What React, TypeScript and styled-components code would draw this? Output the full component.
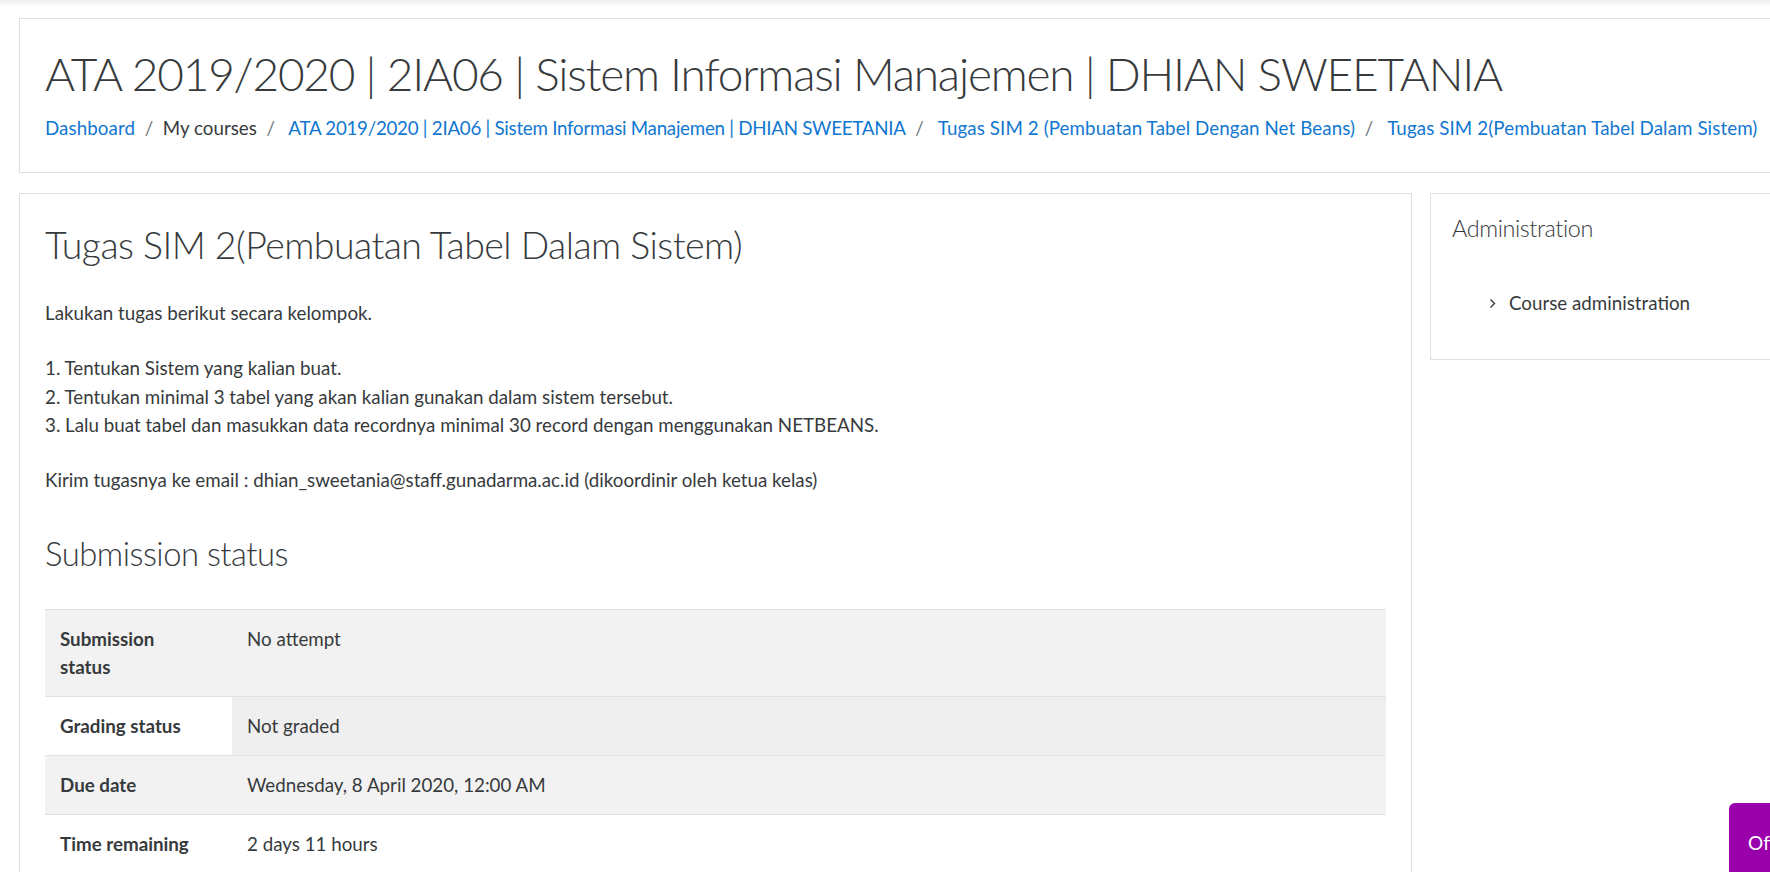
import React from "react";
import styled, { createGlobalStyle } from "styled-components";

const GlobalStyle = createGlobalStyle`
  html, body { margin: 0; padding: 0; background: #fff; overflow: hidden; }
  body {
    font-family: Lato, "Open Sans", "Liberation Sans", sans-serif;
    color: #373a3c;
    font-size: 18.75px;
    line-height: 28.125px;
  }
`;

const TopShadow = styled.div`
  height: 7px;
  background: linear-gradient(to bottom, rgba(0, 0, 0, 0.07), rgba(0, 0, 0, 0));
`;

const Page = styled.div`
  width: 1880px;
  padding: 11px 0 0 19px;
  display: flex;
  flex-direction: column;
  gap: 20px;
`;

const Card = styled.section`
  border: 1px solid #dfdfdf;
  background: #fff;
  box-sizing: border-box;
`;

const HeaderCard = styled(Card)`
  padding: 27px 25px 30px 25px;
`;

const PageTitle = styled.h1`
  margin: 0 0 13px 0;
  font-size: 46px;
  font-weight: 300;
  line-height: 1.2;
  letter-spacing: -1.2px;
  color: #373a3c;
  white-space: nowrap;
`;

const Crumbs = styled.ol`
  list-style: none;
  margin: 0;
  padding: 0;
  display: flex;
  flex-wrap: nowrap;
  white-space: nowrap;
`;

const Crumb = styled.li<{ $first?: boolean }>`
  display: flex;
  &::before {
    content: ${(p) => (p.$first ? "none" : '"/"')};
    color: #6c757d;
    padding: 0 9.6px;
  }
`;

const Link = styled.a<{ $tight?: boolean }>`
  color: #1177d1;
  text-decoration: none;
  letter-spacing: ${(p) => (p.$tight ? "-0.27px" : "0.09px")};
`;

const Columns = styled.div`
  display: flex;
  align-items: flex-start;
  gap: 18px;
`;

const MainCard = styled(Card)`
  width: 1393px;
  height: 720px;
  padding: 28px 25px 25px 25px;
`;

const Heading = styled.h2`
  margin: 0 0 32px 0;
  font-size: 37.5px;
  font-weight: 300;
  line-height: 1.2;
  letter-spacing: -0.55px;
`;

const Para = styled.p`
  margin: 0 0 27px 0;
`;

const SubHeading = styled.h3`
  margin: 40.5px 0 35px 0;
  font-size: 32.8px;
  font-weight: 300;
  line-height: 1.2;
  letter-spacing: -0.5px;
`;

const Table = styled.table`
  width: 100%;
  border-collapse: collapse;
`;

const Row = styled.tr<{ $shade?: boolean }>`
  background: ${(p) => (p.$shade ? "#f2f2f2" : "transparent")};
  border-top: 1px solid #dee2e6;
`;

const Th = styled.th`
  width: 138px;
  text-align: left;
  vertical-align: top;
  padding: 15px 34px 15px 15px;
  font-weight: 700;
`;

const Td = styled.td<{ $shade?: boolean }>`
  vertical-align: top;
  padding: 15px;
  background: ${(p) => (p.$shade ? "#efefef" : "transparent")};
`;

const SideCard = styled(Card)`
  width: 450px;
  padding: 20px 21px 41px 21px;
`;

const SideTitle = styled.h5`
  margin: 0 0 47px 0;
  font-size: 23.4375px;
  font-weight: 300;
  line-height: 1.2;
  letter-spacing: -0.4px;
`;

const NavItem = styled.div`
  display: flex;
  align-items: center;
  gap: 13px;
  padding-left: 37px;
`;

const Badge = styled.div`
  position: fixed;
  left: 1729px;
  top: 803px;
  width: 120px;
  height: 100px;
  background: #9900ab;
  border-top-left-radius: 6px;
  color: #fff;
  font-size: 19px;
  padding: 26px 0 0 19px;
  box-sizing: border-box;
  white-space: nowrap;
`;

const rows = [
  { label: "Submission status", value: "No attempt", shade: true, cellShade: false },
  { label: "Grading status", value: "Not graded", shade: false, cellShade: true },
  { label: "Due date", value: "Wednesday, 8 April 2020, 12:00 AM", shade: true, cellShade: false },
  { label: "Time remaining", value: "2 days 11 hours", shade: false, cellShade: false },
];

export default function App() {
  return (
    <>
      <GlobalStyle />
      <TopShadow />
      <Page>
        <HeaderCard>
          <PageTitle>ATA 2019/2020 | 2IA06 | Sistem Informasi Manajemen | DHIAN SWEETANIA</PageTitle>
          <Crumbs>
            <Crumb $first>
              <Link href="#">Dashboard</Link>
            </Crumb>
            <Crumb>My courses</Crumb>
            <Crumb>
              <Link href="#" $tight>
                &nbsp;ATA 2019/2020 | 2IA06 | Sistem Informasi Manajemen | DHIAN SWEETANIA
              </Link>
            </Crumb>
            <Crumb>
              <Link href="#">&nbsp;Tugas SIM 2 (Pembuatan Tabel Dengan Net Beans)</Link>
            </Crumb>
            <Crumb>
              <Link href="#">&nbsp;Tugas SIM 2(Pembuatan Tabel Dalam Sistem)</Link>
            </Crumb>
          </Crumbs>
        </HeaderCard>
        <Columns>
          <MainCard>
            <Heading>Tugas SIM 2(Pembuatan Tabel Dalam Sistem)</Heading>
            <Para>Lakukan tugas berikut secara kelompok.</Para>
            <Para>
              1. Tentukan Sistem yang kalian buat.
              <br />
              2. Tentukan minimal 3 tabel yang akan kalian gunakan dalam sistem tersebut.
              <br />
              3. Lalu buat tabel dan masukkan data recordnya minimal 30 record dengan menggunakan NETBEANS.
            </Para>
            <Para>Kirim tugasnya ke email : dhian_sweetania@staff.gunadarma.ac.id (dikoordinir oleh ketua kelas)</Para>
            <SubHeading>Submission status</SubHeading>
            <Table>
              <tbody>
                {rows.map((r) => (
                  <Row key={r.label} $shade={r.shade}>
                    <Th>{r.label}</Th>
                    <Td $shade={r.cellShade}>{r.value}</Td>
                  </Row>
                ))}
              </tbody>
            </Table>
          </MainCard>
          <SideCard>
            <SideTitle>Administration</SideTitle>
            <NavItem>
              <svg width="7" height="11" viewBox="0 0 7 11">
                <path d="M1.5 1.5 L5.5 5.5 L1.5 9.5" fill="none" stroke="#373a3c" strokeWidth="1.4" />
              </svg>
              <span>Course administration</span>
            </NavItem>
          </SideCard>
        </Columns>
      </Page>
      <Badge>Offline</Badge>
    </>
  );
}
